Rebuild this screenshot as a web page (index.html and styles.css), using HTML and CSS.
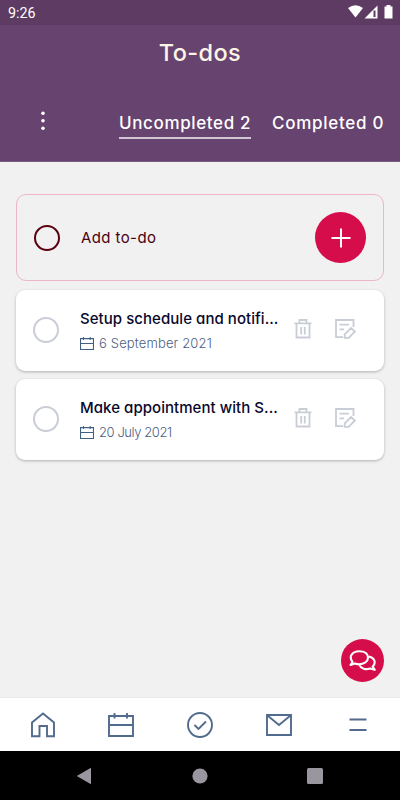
FILE: index.html
```html
<!DOCTYPE html>
<html lang="en">
<head>
<meta charset="utf-8">
<title>To-dos</title>
<link rel="stylesheet" href="styles.css">
</head>
<body>
<svg class="defs" aria-hidden="true">
  <symbol id="calendar" viewBox="0 0 26 24"><path d="M1 3h24v20H1zM1 12h24M6.500 0v5.500M19 0v5.500"/></symbol>
  <symbol id="trash" viewBox="0 0 18 20"><path d="M.5 4.300h17M5.500 4V1h7v3M2.500 4.500V18.500h13V4.500M7.200 8v7.500M10.800 8v7.500"/></symbol>
  <symbol id="edit" viewBox="0 0 21 20"><path d="M8 18.200H1V1h17.500v7M4.500 5.700h9.500M4.500 10.300h4.500M9.700 18.900v-3.600l6.300-6.300 3.900 3.500-6.200 6.400z"/></symbol>
</svg>
<div class="phone">
  <header>
    <div class="status">
      <span>9:26</span>
      <svg width="45" height="14" viewBox="0 0 45 14"><path d="M0 3Q7.500-2.300 15 3L7.500 12.500z"/><path d="M16.500 13.500L29.500 .5v13z"/><path class="signal-gap" d="M25.500 5.500h2v6.500h-2z"/><path d="M36.500 1.500h2V0h4v1.500h2V13.500h-8z"/></svg>
    </div>
    <h1>To-dos</h1>
    <nav class="tabs">
      <svg class="more" width="6" height="20"><circle cx="3" cy="2.300" r="1.800"/><circle cx="3" cy="9.800" r="1.800"/><circle cx="3" cy="17.300" r="1.800"/></svg>
      <span class="tab active">Uncompleted 2</span>
      <span class="tab done">Completed 0</span>
    </nav>
  </header>
  <main>
    <section class="add">
      <i class="ring"></i><span class="add-label">Add to-do</span>
      <span class="plus"><svg width="20" height="20"><path d="M10 .5v19M.5 10h19"/></svg></span>
    </section>
    <article class="card">
      <i class="ring"></i>
      <div class="info"><h2 class="first">Setup schedule and notifi...</h2><p><svg width="14" height="13"><use href="#calendar"/></svg><span class="date-first">6 September 2021</span></p></div>
      <svg class="trash" width="18" height="20"><use href="#trash"/></svg><svg class="edit" width="21" height="20"><use href="#edit"/></svg>
    </article>
    <article class="card">
      <i class="ring"></i>
      <div class="info"><h2 class="second">Make appointment with S...</h2><p><svg width="14" height="13"><use href="#calendar"/></svg><span class="date-second">20 July 2021</span></p></div>
      <svg class="trash" width="18" height="20"><use href="#trash"/></svg><svg class="edit" width="21" height="20"><use href="#edit"/></svg>
    </article>
  </main>
  <span class="chat"><svg width="28" height="22" viewBox="0 0 28 22"><path d="M3.500 12C-1 6 4 1.300 10 1.300s9 2.800 9 6.500-4 6.500-9 6.500c-2 0-3-.4-4-.8l-4.500 1.500zM19.500 6.600c6 .6 8 6.400 4.200 10l2 3.200-4.800-1.300c-4 1.500-9 .2-10.500-3.700"/></svg></span>
  <nav class="bottom">
    <svg width="26" height="26"><path d="M2 24.200V10.500L13 1.500l11 9v13.700h-7V14H9.500v10.200z"/></svg>
    <svg width="26" height="24"><use href="#calendar"/></svg>
    <svg width="26" height="26"><circle cx="13" cy="13" r="12"/><path d="M7.500 13l4 4 7.500-7.500"/></svg>
    <svg width="26" height="22"><path d="M1 1h24v20H1zM1.500 1.500L13 11 24.500 1.500"/></svg>
    <svg width="26" height="14"><path d="M4.500 1.500h17M4.500 12h17"/></svg>
  </nav>
  <div class="system">
    <svg width="16" height="18"><path d="M.7 9L15 .7v16.600z"/></svg>
    <svg width="16" height="16"><circle cx="8" cy="8" r="7.600"/></svg>
    <svg width="16" height="16"><rect width="16" height="16" rx="1.500"/></svg>
  </div>
</div>
</body>
</html>
```
FILE: styles.css
```css
* { box-sizing: border-box; }
body { margin: 0; font-family: Inter, "Open Sans", sans-serif; font-feature-settings: "cv11"; }
h1, h2, p { margin: 0; white-space: nowrap; }
svg { display: block; flex: none; fill: none; }
.defs { position: absolute; width: 0; height: 0; }
.phone { position: relative; width: 400px; height: 800px; display: flex; flex-direction: column; background: #f1f1f1; overflow: hidden; }
header { height: 162px; background: #67436f; color: #fff; border-bottom: 1px solid #795d80; }
.status { height: 25px; background: #5d3b62; display: flex; justify-content: space-between; padding: 5px 7.5px 0 8px; font: 14.300px/17px Roboto, sans-serif; }
.status svg { fill: #fff; }
.status .signal-gap { fill: #5d3b62; }
h1 { height: 54px; text-align: center; font-size: 23.500px; line-height: 55px; font-weight: 500; color: #fcf5e5; letter-spacing: .4px; }
.tabs { display: flex; padding-left: 39.500px; height: 60px; margin-top: 30px; }
.more { fill: #fff; margin-top: 1.500px; }
.tab { height: 30px; font-size: 17px; line-height: 29px; font-weight: 500; white-space: nowrap; }
.active { width: 132px; margin-left: 73.500px; border-bottom: 2px solid #d1c7d4; letter-spacing: .63px; }
.done { margin-left: 21px; letter-spacing: .73px; }
main { flex: 1; padding: 32px 16px 0; }
.ring { width: 26px; height: 26px; border: 2px solid #c9cdd5; border-radius: 50%; flex: none; }
.add { height: 87px; border: 1px solid #edb7c7; border-radius: 10px; display: flex; align-items: center; padding: 0 17px; color: #4c0010; }
.add .ring { border-color: #5b000f; }
.add-label { margin-left: 21px; font-size: 15px; letter-spacing: .4px; }
.plus { width: 51px; height: 51px; margin-left: auto; border-radius: 50%; background: #d50d4a; display: grid; place-items: center; }
.plus svg { stroke: #fff; stroke-width: 2; }
.card { display: flex; align-items: flex-start; height: 80.500px; margin-top: 9px; border-radius: 9px; background: #fff; box-shadow: 0 1px 3px #0004; }
.card + .card { margin-top: 8.500px; }
.card > .ring { margin: 27px 0 0 17px; }
.info { width: 199px; margin: 17.500px 0 0 21px; }
h2 { color: #08082c; font-size: 15px; line-height: 22px; font-weight: 450; }
h2.first, h2.second { letter-spacing: .05px; }
.info p { display: flex; align-items: center; height: 18px; margin-top: 4.500px; font-size: 13px; font-weight: 300; color: #4c6081; }
.info p svg { margin-right: 5px; stroke: #416083; stroke-width: 2; }
.date-first { letter-spacing: .15px; }
.date-second { letter-spacing: -.42px; }
.trash, .edit { stroke: #c9cdd5; stroke-width: 1.800; margin-top: 28.500px; }
.trash { margin-left: 15px; }
.edit { margin-left: 23px; }
.chat { position: absolute; left: 341px; top: 639px; width: 43px; height: 43px; border-radius: 50%; background: #d50d4a; display: grid; place-items: center; }
.chat svg { stroke: #fff; stroke-width: 2.100; stroke-linejoin: round; }
.bottom { height: 54px; background: #fff; border-top: 1px solid #e9e9e9; display: flex; align-items: center; justify-content: space-between; padding: 0 29.500px; stroke: #526b8c; stroke-width: 1.900; }
.system { height: 49px; background: #000; display: flex; align-items: center; justify-content: space-between; padding: 0 77px 0 76px; }
.system svg { fill: #9a969f; }
```
